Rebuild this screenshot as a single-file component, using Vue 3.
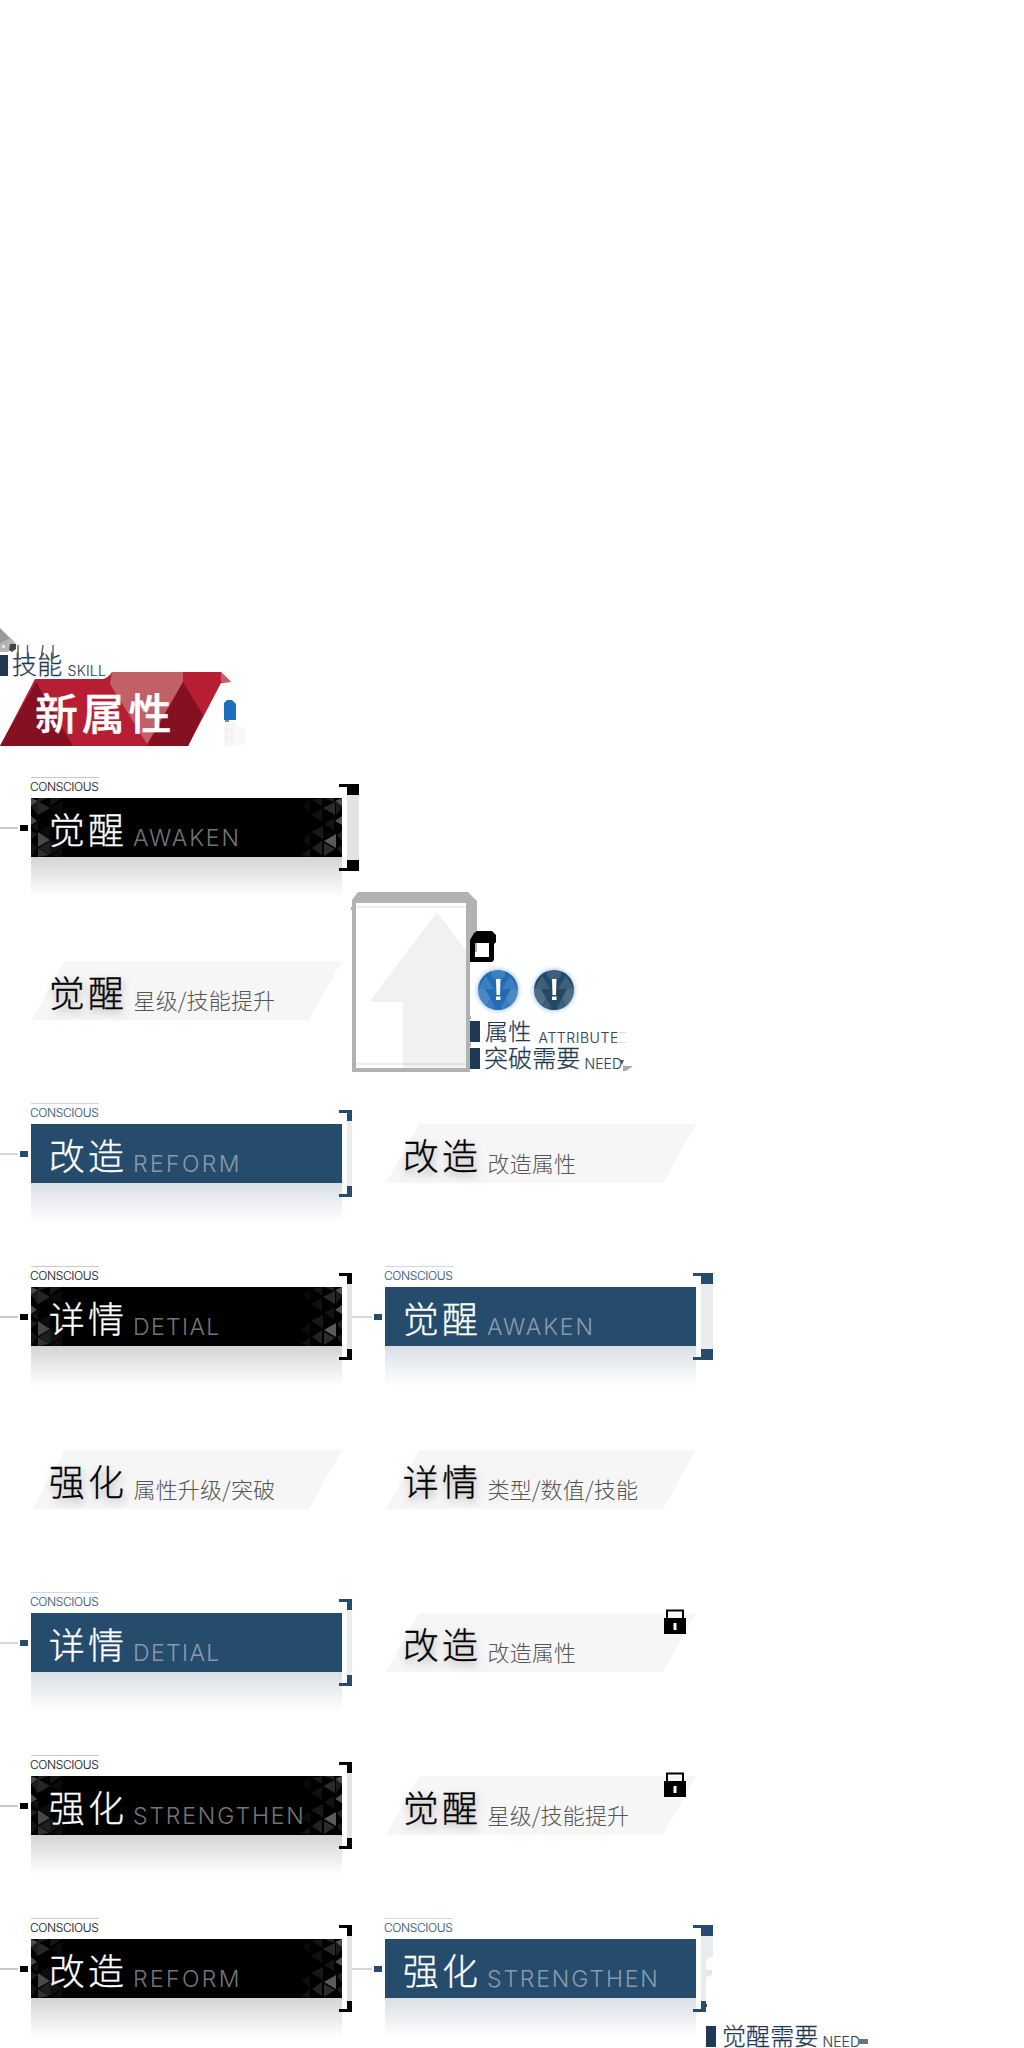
<script setup>
const cells = [
  { kind: 'banner', title: '觉醒', en: 'AWAKEN', tone: 'dark', wide: true, row: 1, col: 1 },
  { kind: 'tab', title: '觉醒', sub: '星级/技能提升', row: 2, col: 1 },
  { kind: 'banner', title: '改造', en: 'REFORM', tone: 'blue', row: 3, col: 1 },
  { kind: 'tab', title: '改造', sub: '改造属性', row: 3, col: 2 },
  { kind: 'banner', title: '详情', en: 'DETIAL', tone: 'dark', row: 4, col: 1 },
  { kind: 'banner', title: '觉醒', en: 'AWAKEN', tone: 'blue', wide: true, row: 4, col: 2 },
  { kind: 'tab', title: '强化', sub: '属性升级/突破', row: 5, col: 1 },
  { kind: 'tab', title: '详情', sub: '类型/数值/技能', row: 5, col: 2 },
  { kind: 'banner', title: '详情', en: 'DETIAL', tone: 'blue', row: 6, col: 1 },
  { kind: 'tab', title: '改造', sub: '改造属性', lock: true, row: 6, col: 2 },
  { kind: 'banner', title: '强化', en: 'STRENGTHEN', tone: 'dark', row: 7, col: 1 },
  { kind: 'tab', title: '觉醒', sub: '星级/技能提升', lock: true, row: 7, col: 2 },
  { kind: 'banner', title: '改造', en: 'REFORM', tone: 'dark', row: 8, col: 1 },
  { kind: 'banner', title: '强化', en: 'STRENGTHEN', tone: 'blue', torn: true, row: 8, col: 2 },
]
/* triangle facets of the dark bars: points and shade */
const facets = [
  ['0,0 7,3 0,8', '#4a4a4a'], ['7,3 19,10 7,17', '#262626'], ['0,8 7,3 7,17', '#1c1c1c'],
  ['7,0 18,0 7,4', '#202020'], ['19,0 31,0 19,8', '#151515'], ['19,10 31,3 31,17', '#0a0a0a'],
  ['0,18 6,23 0,27', '#484848'], ['0,28 7,24 7,33', '#121212'], ['7,34 19,42 7,49', '#484848'],
  ['0,33 7,36 0,41', '#1c1c1c'], ['19,27 19,41 8,34', '#0c0c0c'], ['19,43 19,57 8,50', '#1f1f1f'],
  ['7,50 18,57 7,59', '#303030'], ['19,42 31,49 19,57', '#121212'], ['31,50 20,58 31,59', '#0e0e0e'],
  ['0,43 6,50 0,59', '#131313'], ['31,36 31,48 21,42', '#090909'],
  ['311,0 304,3 311,8', '#505050'], ['304,4 292,10 304,17', '#2a2a2a'], ['305,3 311,9 305,17', '#1c1c1c'],
  ['303,0 293,0 303,4', '#222'], ['291,0 281,2 291,8', '#161616'], ['291,11 280,17 291,24', '#101010'],
  ['311,18 304,23 311,27', '#505050'], ['303,20 293,26 303,32', '#131313'], ['305,36 293,43 305,50', '#5a5a5a'],
  ['292,28 280,34 292,41', '#181818'], ['291,43 281,50 291,57', '#222'], ['293,45 304,51 293,58', '#2c2c2c'],
  ['311,33 306,37 311,43', '#222'], ['306,50 311,47 311,57', '#1c1c1c'], ['279,36 270,42 279,48', '#0c0c0c'],
  ['279,51 270,57 279,59', '#131313'], ['279,2 271,8 279,14', '#090909'],
]
</script>

<template>
  <main class="page">
    <header class="head">
      <div class="skill">
        <svg class="scrap" width="17" height="25" viewBox="0 0 17 25">
          <path d="M0 0L11 11V17H0Z" fill="#999" /><path d="M0 15L11 10L16 16L8 24H0Z" fill="#b5b5b5" />
          <path d="M10 16H16V21L12 24L9 22Z" fill="#444" /><path d="M2 17H5V20H2Z" fill="#e4e4e4" />
        </svg>
        <i class="mark"></i>
        <span class="label-cn skill-cn">技能</span><span class="label-en skill-en">SKILL</span>
        <svg class="ticks" width="50" height="14" viewBox="0 0 50 14" stroke="#4a5d73" stroke-width="1.4">
          <path d="M6 0V14M15.500 0V14M31 0L29 14M41 0V14" />
        </svg>
      </div>
      <div class="badge-row">
        <div class="badge">
          <svg class="badge-bg" width="231" height="75" viewBox="0 0 231 75">
            <path d="M35 7H103Q108 6 112 0H221L231 10L221 11L188 74H0Z" fill="#b71d33" />
            <path d="M36 10L73 74H0Z" fill="#841022" />
            <path d="M110 12L112 0H183V10L147 72Z" fill="#c26068" />
            <path d="M183 10L203 43L188 74H147Z" fill="#841022" />
            <path d="M221 0L231 10H221Z" fill="#cd5a69" />
          </svg>
          <span class="badge-text">新属性</span>
        </div>
        <svg class="chip" width="24" height="46" viewBox="0 0 24 46">
          <path d="M0 3L3 0H8L12 4V20H0Z" fill="#1e6fbb" />
          <path d="M1 21H12V26L20 28L23 35L20 44L11 46H0V24Z" fill="#f8f8f8" />
          <path d="M3 26V46M8 24V46M0 30H12M0 38H12" fill="none" stroke="#ececec" />
          <path d="M1 20H5V22H1Z" fill="#888" />
        </svg>
      </div>
    </header>

    <section class="board">
      <template v-for="(c, i) in cells" :key="i">
        <article v-if="c.kind === 'banner'" class="banner" :class="[c.tone, 'r' + c.row, 'c' + c.col]">
          <div class="lead"><i class="line"></i><i class="dot"></i></div>
          <div class="body">
            <div class="eyebrow">CONSCIOUS</div>
            <div class="bar">
              <svg v-if="c.tone === 'dark'" class="facets" width="311" height="59" viewBox="0 0 311 59">
                <polygon v-for="(f, k) in facets" :key="k" :points="f[0]" :fill="f[1]" />
              </svg>
              <span class="title">{{ c.title }}</span><span class="en" :class="c.en.toLowerCase()">{{ c.en }}</span>
            </div>
            <div class="fade"></div>
          </div>
          <svg class="bracket" width="20" height="87" viewBox="0 0 20 87" shape-rendering="crispEdges">
            <path v-if="c.wide" class="rail" d="M8 11H20V76H8Z" />
            <path v-else-if="c.torn" class="rail" d="M8 11H20V32H16L13 35V76H8Z" />
            <path v-else class="rail" d="M8 11H13V76H8Z" />
            <path v-if="c.torn" d="M13 45H19V50L13 52Z" fill="#e7e7e7" />
            <path v-if="c.wide" class="cap" d="M0 0H20V11H8V3H0ZM0 87V84H8V76H20V87Z" />
            <path v-else-if="c.torn" class="cap" d="M0 0H20V11H8V3H0ZM0 87V84H8V76H13V79H14V82H13V87Z" />
            <path v-else class="cap" d="M0 0H13V11H8V3H0ZM0 87V84H8V76H13V87Z" />
          </svg>
        </article>
        <article v-else class="tab" :class="['r' + c.row, 'c' + c.col]">
          <div class="plate">
            <span class="title">{{ c.title }}</span><span class="sub">{{ c.sub }}</span>
            <svg v-if="c.lock" class="lock" width="22" height="26" viewBox="0 0 22 26">
              <path d="M3 9V1.500H19V9" fill="none" stroke="#000" stroke-width="2" />
              <path d="M0 9H22V25H0Z" fill="#000" /><path d="M9.500 14H12.500V21H9.500Z" fill="#fff" />
            </svg>
          </div>
        </article>
      </template>

      <aside class="cluster">
        <svg class="frame" width="127" height="181" viewBox="0 0 127 181">
          <path d="M1 8L7 0H117L126 9V60H119V180H1ZM5 11V176H115V11Z" fill="#b2b2b2" fill-rule="evenodd" />
          <path d="M86 20L115 59V176H52V110H18Z" fill="#f1f1f1" />
          <path d="M5 14H115V16H5ZM5 171H115V173H5Z" fill="#777" opacity=".13" />
          <path d="M0 15H1V18H0ZM119 124H120V127H119ZM119 151H120V154H119Z" fill="#aaa" />
        </svg>
        <div class="stack">
          <svg class="card" width="26" height="31" viewBox="0 0 26 31">
            <path d="M0 9L4 2L7 0H22L26 4V11L24 13V29L22 31H0ZM5 12V26H19V12Z" fill="#000" fill-rule="evenodd" />
          </svg>
          <div class="alerts">
            <svg v-for="(col, k) in ['#216cb5', '#224967']" :key="k" width="56" height="52" viewBox="0 0 56 52">
              <defs>
                <clipPath :id="'disc' + k"><circle cx="28" cy="26" r="20" /></clipPath>
                <filter :id="'glow' + k" x="-30%" y="-30%" width="160%" height="160%"><feGaussianBlur stdDeviation="2" /></filter>
              </defs>
              <circle cx="28" cy="26" r="21" fill="#78a9e0" opacity=".65" :filter="`url(#glow${k})`" />
              <circle cx="28" cy="26" r="20" :fill="col" />
              <g :clip-path="`url(#disc${k})`" fill="#fff">
                <path d="M21 5H35V12L28 19L21 12ZM16 12L24 25H8ZM40 12L48 25H32Z" opacity=".13" />
                <path d="M8 25H15L20 34L14 46H5ZM48 25H41L36 34L42 46H52Z" opacity=".2" />
                <path d="M20 34L25 43L22 48H14ZM36 34L31 43L34 48H42Z" opacity=".12" />
              </g>
              <path d="M26 15H30.500L30 31H26.500ZM26 32.500H30.500V36H26Z" fill="#fff" />
            </svg>
          </div>
          <div class="label"><i class="mark"></i><span class="label-cn">属性</span><span class="label-en attr">ATTRIBUTE</span><i class="tail"></i></div>
          <div class="label second"><i class="mark"></i><span class="label-cn big">突破需要</span><span class="label-en need">NEED</span>
            <svg class="nib" width="13" height="11" viewBox="0 0 13 11"><path d="M0 0H4L2 5Z" fill="#4c5c6c" /><path d="M3 6H13L6 11H3Z" fill="#aaa" /></svg>
          </div>
        </div>
      </aside>

      <div class="label last"><i class="mark"></i><span class="label-cn big">觉醒需要</span><span class="label-en need">NEED</span><i class="smudge"></i></div>
    </section>
  </main>
</template>

<style>
body { margin: 0; background: #fff; }
</style>

<style scoped>
.page { width: 1024px; height: 2048px; overflow: hidden; background: #fff; font-family: "Liberation Sans", "Noto Sans CJK SC", sans-serif; }
i { display: block; flex: none; }
svg { display: block; flex: none; }
span { white-space: nowrap; flex: none; }
.head { height: 149px; padding-top: 628px; }
.skill { position: relative; display: flex; height: 44px; align-items: flex-start; }
.scrap { position: absolute; left: 0; top: 0; }
.ticks { position: absolute; left: 12px; top: 17px; }
.mark { width: 10px; height: 21px; background: #1f3853; }
.skill .mark { width: 8px; margin-top: 27px; }
.label-cn { color: #1f3853; font: 300 23px/24px "Noto Sans CJK SC", sans-serif; letter-spacing: .3px; -webkit-text-stroke: .25px #1f3853; }
.label-cn.big { font-size: 24px; letter-spacing: .1px; }
.label-en { color: #2f455e; font: 300 14px/14px Inter, "Liberation Sans", sans-serif; -webkit-text-stroke: .15px #2f455e; }
.skill-cn { margin: 23px 0 0 4px; font-size: 25px; }
.skill-en { margin: 36px 0 0 5px; letter-spacing: .2px; }
.badge-row { display: flex; align-items: flex-start; }
.badge { position: relative; width: 224px; height: 75px; }
.badge-bg { position: absolute; left: 0; top: 0; }
.badge-text { position: relative; display: block; margin: 10px 0 0 35px; color: #fff; font: 500 43px/58px "Noto Sans CJK SC", sans-serif; letter-spacing: 3.800px; -webkit-text-stroke: .4px #fff; }
.chip { margin-top: 28px; }

.board { display: grid; grid-template-columns: 354px 354px 316px; grid-template-rows: repeat(8, 163px); }
.r1 { grid-row: 1; } .r2 { grid-row: 2; } .r3 { grid-row: 3; } .r4 { grid-row: 4; }
.r5 { grid-row: 5; } .r6 { grid-row: 6; } .r7 { grid-row: 7; } .r8 { grid-row: 8; }
.c1 { grid-column: 1; } .c2 { grid-column: 2; }
.banner { display: flex; align-items: flex-start; --ink: #000; --rule: #c9c9c9; --rail: #e3e3e3; --en: #757575; --txt: #222; --fade: 0, 0, 0; }
.banner.blue { --ink: #254c6c; --rule: #cdd9e3; --rail: #e8ecef; --en: #8b9aaa; --txt: #365b7b; --fade: 37, 65, 95; }
.lead { display: flex; align-items: center; gap: 2px; width: 31px; height: 6px; margin-top: 48px; flex: none; }
.line { width: 18px; height: 2px; background: var(--rule); }
.c2 .lead { width: 33px; margin-left: -2px; }
.c2 .line { width: 20px; }
.dot { width: 8px; height: 6px; background: var(--ink); }
.body { width: 311px; flex: none; }
.eyebrow { box-sizing: border-box; width: 68px; height: 21px; border-top: 1px solid var(--rule); padding-top: 2px; color: var(--txt); font: 300 12px/14px Inter, "Liberation Sans", sans-serif; letter-spacing: -.4px; text-indent: -1px; white-space: nowrap; -webkit-text-stroke: .12px currentColor; }
.bar { position: relative; display: flex; height: 59px; background: var(--ink); }
.facets { position: absolute; left: 0; top: 0; }
.title { position: relative; width: 84px; margin: 1px 0 0 18px; font: 300 36px/59px "Noto Sans CJK SC", sans-serif; letter-spacing: 3.300px; text-indent: -.3px; color: #fff; height: 58px; -webkit-text-stroke: .3px currentColor; }
.en { position: relative; padding-top: 27px; color: var(--en); font: 300 23px/26px Inter, "Liberation Sans", sans-serif; letter-spacing: 1.850px; }
.reform { letter-spacing: 2.400px; }
.detial { letter-spacing: 1.400px; }
.fade { height: 40px; background: linear-gradient(rgba(var(--fade), .17), rgba(var(--fade), 0)); }
.bracket { margin: 7px -7px 0 -3px; position: relative; }
.rail { fill: var(--rail); }
.cap { fill: var(--ink); }

.tab { padding: 21px 0 0 32px; }
.plate { position: relative; display: flex; width: 310px; height: 59px; }
.plate::before { content: ""; position: absolute; inset: 0; background: #f6f6f6; clip-path: polygon(33px 0, 310px 0, 277px 59px, 0 59px); }
.plate .title { margin-left: 17px; color: #000; text-shadow: 1px 4px 9px rgba(0, 0, 0, .35); }
.sub { position: relative; padding-top: 22px; color: #555; font: 300 22px/32px "Noto Sans CJK SC", sans-serif; letter-spacing: .15px; margin-left: .5px; }
.lock { position: absolute; left: 278px; top: -4px; }

.cluster { grid-column: 2; grid-row: 2; display: flex; align-items: flex-start; margin: -48px 0 0 -3px; }
.stack { margin-left: -8px; padding-top: 39px; position: relative; }
.alerts { display: flex; margin-top: 2px; height: 52px; }
.label { display: flex; align-items: flex-start; height: 27px; }
.stack .label { margin-top: 5px; }
.stack .label.second { margin-top: 0; }
.label .label-cn { margin: -3px 0 0 5px; }
.label .big { margin: -3px 0 0 4px; }
.attr { width: 78px; margin: 10px 0 0 7px; letter-spacing: .55px; }
.need { width: 38px; margin: 9px 0 0 4px; letter-spacing: .1px; }
.tail { width: 9px; height: 9px; margin-top: 11px; border: solid #ddd; border-width: 1px 0; }
.nib { margin: 12px 0 0 -2px; }
.last { grid-column: 3; grid-row: 8; margin: 108px 0 0 -2px; }
.last .big { margin: -3px 0 0 6px; }
.smudge { width: 10px; height: 5px; margin-top: 13px; margin-left: -2px; background: #66778a; }
</style>
